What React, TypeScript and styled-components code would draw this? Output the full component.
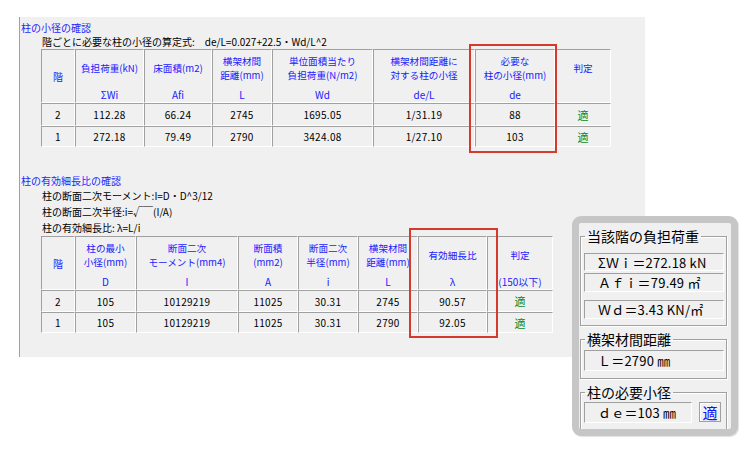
import React from "react";
import styled, { createGlobalStyle } from "styled-components";

const GlobalStyle = createGlobalStyle`
  html, body { margin: 0; padding: 0; background: #ffffff; }
  body { font-family: "Noto Sans CJK JP", "Noto Sans", sans-serif; }
  * { box-sizing: border-box; }
`;

const Page = styled.div`
  position: relative;
  width: 750px;
  height: 455px;
  overflow: hidden;
  padding: 17px 0 0 19px;
`;

const Panel = styled.div`
  width: 626px;
  height: 340px;
  background: #f0f0f0;
  border-left: 1px solid #a0a0a0;
  padding: 4px 0 0 1px;
  display: flex;
  flex-direction: column;
`;

const SectionTitle = styled.div<{ $mt?: number }>`
  font-size: 10px;
  line-height: 14px;
  color: #1f1fff;
  margin-top: ${(p) => p.$mt ?? 0}px;
  white-space: nowrap;
`;

const Formula = styled.div<{ $lh?: number }>`
  font-size: 10px;
  line-height: ${(p) => p.$lh ?? 14}px;
  color: #000;
  margin-left: 21px;
  white-space: nowrap;
`;

const Grid = styled.div<{ $cols: string; $rows: string }>`
  display: grid;
  grid-template-columns: ${(p) => p.$cols};
  grid-template-rows: ${(p) => p.$rows};
  margin-left: 20px;
  width: max-content;
`;

const CellBase = styled.div`
  border-top: 1px solid #a0a0a0;
  border-left: 1px solid #a0a0a0;
  border-right: 1px solid #ffffff;
  border-bottom: 1px solid #ffffff;
  font-size: 10px;
  white-space: nowrap;
`;

const HeadCell = styled(CellBase)<{ $full?: boolean }>`
  color: #2020ff;
  display: flex;
  flex-direction: column;
  align-items: center;
  justify-content: ${(p) => (p.$full ? "center" : "flex-start")};
  text-align: center;
`;

const HeadLabel = styled.div`
  height: 36px;
  display: flex;
  align-items: center;
  justify-content: center;
  font-size: 9.6px;
  line-height: 14px;
`;

const HeadSym = styled.div`
  padding-top: 3px;
  line-height: 14px;
`;

const BodyCell = styled(CellBase)<{ $ok?: boolean }>`
  display: flex;
  align-items: center;
  justify-content: center;
  color: ${(p) => (p.$ok ? "#0a8a1a" : "#000")};
  font-size: ${(p) => (p.$ok ? "11px" : "10px")};
  letter-spacing: ${(p) => (p.$ok ? "0" : "0.3px")};
`;

const RedFrame = styled.div<{ $x: number; $y: number; $w: number; $h: number }>`
  position: absolute;
  left: ${(p) => p.$x}px;
  top: ${(p) => p.$y}px;
  width: ${(p) => p.$w}px;
  height: ${(p) => p.$h}px;
  border: 2px solid #d63a2c;
  pointer-events: none;
`;

const Popup = styled.div`
  position: absolute;
  left: 572px;
  top: 216px;
  width: 166px;
  height: 220px;
  border: 7px solid #c6c6c6;
  border-radius: 9px;
  background: #f0f0f0;
  overflow: hidden;
  padding: 5px 4px 0 1px;
  display: flex;
  flex-direction: column;
  box-shadow: 1px 1px 1px rgba(0, 0, 0, 0.12);
`;

const Group = styled.fieldset<{ $mt?: number; $pb?: number }>`
  margin: ${(p) => p.$mt ?? 0}px 0 0 0;
  padding: 0 2px ${(p) => p.$pb ?? 6}px 3px;
  border: 1px solid #a0a0a0;
  box-shadow: inset 1px 1px 0 #ffffff, 1px 1px 0 #ffffff;
  min-width: 0;
  flex-shrink: 0;
`;

const GroupLegend = styled.legend`
  font-size: 14px;
  line-height: 16px;
  padding: 0 2px;
  margin-left: 1px;
  color: #000;
  white-space: nowrap;
`;

const ValueBox = styled.div<{ $mt: number; $h: number; $w?: number }>`
  margin-top: ${(p) => p.$mt}px;
  height: ${(p) => p.$h}px;
  width: ${(p) => (p.$w ? `${p.$w}px` : "auto")};
  border-top: 1px solid #a0a0a0;
  border-left: 1px solid #a0a0a0;
  border-right: 1px solid #ffffff;
  border-bottom: 1px solid #ffffff;
  display: flex;
  align-items: center;
  padding-left: 13px;
  font-size: 13px;
  color: #000;
  white-space: nowrap;
  letter-spacing: 0.2px;
`;

const Row = styled.div`
  display: flex;
  align-items: flex-start;
  gap: 7px;
`;

const OkButton = styled.div`
  margin-top: 2px;
  width: 22px;
  height: 20px;
  border: 1px solid #a0a0a0;
  box-shadow: inset 1px 1px 0 #ffffff;
  display: flex;
  align-items: center;
  justify-content: center;
  color: #1010ff;
  font-size: 15px;
  line-height: 1;
`;

type Head = { label?: React.ReactNode; sym?: string; full?: string };

const table1Head: Head[] = [
  { full: "階" },
  { label: "負担荷重(kN)", sym: "ΣWi" },
  { label: "床面積(m2)", sym: "Afi" },
  { label: <>横架材間<br />距離(mm)</>, sym: "L" },
  { label: <>単位面積当たり<br />負担荷重(N/m2)</>, sym: "Wd" },
  { label: <>横架材間距離に<br />対する柱の小径</>, sym: "de/L" },
  { label: <>必要な<br />柱の小径(mm)</>, sym: "de" },
  { label: "判定", sym: "" },
];

const table1Rows = [
  ["2", "112.28", "66.24", "2745", "1695.05", "1/31.19", "88", "適"],
  ["1", "272.18", "79.49", "2790", "3424.08", "1/27.10", "103", "適"],
];

const table2Head: Head[] = [
  { full: "階" },
  { label: <>柱の最小<br />小径(mm)</>, sym: "D" },
  { label: <>断面二次<br />モーメント(mm4)</>, sym: "I" },
  { label: <>断面積<br />(mm2)</>, sym: "A" },
  { label: <>断面二次<br />半径(mm)</>, sym: "i" },
  { label: <>横架材間<br />距離(mm)</>, sym: "L" },
  { label: "有効細長比", sym: "λ" },
  { label: "判定", sym: "(150以下)" },
];

const table2Rows = [
  ["2", "105", "10129219", "11025", "30.31", "2745", "90.57", "適"],
  ["1", "105", "10129219", "11025", "30.31", "2790", "92.05", "適"],
];

function DataTable({ cols, rows, head, data }: { cols: string; rows: string; head: Head[]; data: string[][] }) {
  return (
    <Grid $cols={cols} $rows={rows}>
      {head.map((h, i) =>
        h.full ? (
          <HeadCell key={`h${i}`} $full>
            {h.full}
          </HeadCell>
        ) : (
          <HeadCell key={`h${i}`}>
            <HeadLabel>{h.label}</HeadLabel>
            <HeadSym>{h.sym}</HeadSym>
          </HeadCell>
        )
      )}
      {data.map((r, ri) =>
        r.map((v, ci) => (
          <BodyCell key={`c${ri}-${ci}`} $ok={v === "適"}>
            {v}
          </BodyCell>
        ))
      )}
    </Grid>
  );
}

export default function App() {
  return (
    <>
      <GlobalStyle />
      <Page>
        <Panel>
          <SectionTitle>柱の小径の確認</SectionTitle>
          <Formula>階ごとに必要な柱の小径の算定式:　de/L=0.027+22.5・Wd/L^2</Formula>
          <DataTable
            cols="34px 69px 68px 60px 101px 102px 80px 56px"
            rows="54px 23px 21px"
            head={table1Head}
            data={table1Rows}
          />
          <SectionTitle $mt={27}>柱の有効細長比の確認</SectionTitle>
          <Formula $lh={16}>柱の断面二次モーメント:I=D・D^3/12</Formula>
          <Formula $lh={16}>柱の断面二次半径:i=√￣(I/A)</Formula>
          <Formula $lh={16}>柱の有効細長比: λ=L/i</Formula>
          <DataTable
            cols="34px 61px 102px 60px 60px 60px 69px 66px"
            rows="54px 22px 21px"
            head={table2Head}
            data={table2Rows}
          />
        </Panel>

        <RedFrame $x={469} $y={44} $w={88} $h={109} />
        <RedFrame $x={409} $y={228} $w={89} $h={110} />

        <Popup>
          <Group $pb={6}>
            <GroupLegend>当該階の負担荷重</GroupLegend>
            <ValueBox $mt={9} $h={18}>ΣＷｉ＝272.18 kN</ValueBox>
            <ValueBox $mt={2} $h={19}>Ａｆｉ＝79.49 ㎡</ValueBox>
            <ValueBox $mt={8} $h={19}>Ｗｄ＝3.43 KN/㎡</ValueBox>
          </Group>
          <Group $mt={5} $pb={7}>
            <GroupLegend>横架材間距離</GroupLegend>
            <ValueBox $mt={3} $h={21}>Ｌ＝2790 ㎜</ValueBox>
          </Group>
          <Group $mt={5} $pb={16}>
            <GroupLegend>柱の必要小径</GroupLegend>
            <Row>
              <ValueBox $mt={2} $h={21} $w={108}>ｄｅ＝103 ㎜</ValueBox>
              <OkButton>適</OkButton>
            </Row>
          </Group>
        </Popup>
      </Page>
    </>
  );
}
